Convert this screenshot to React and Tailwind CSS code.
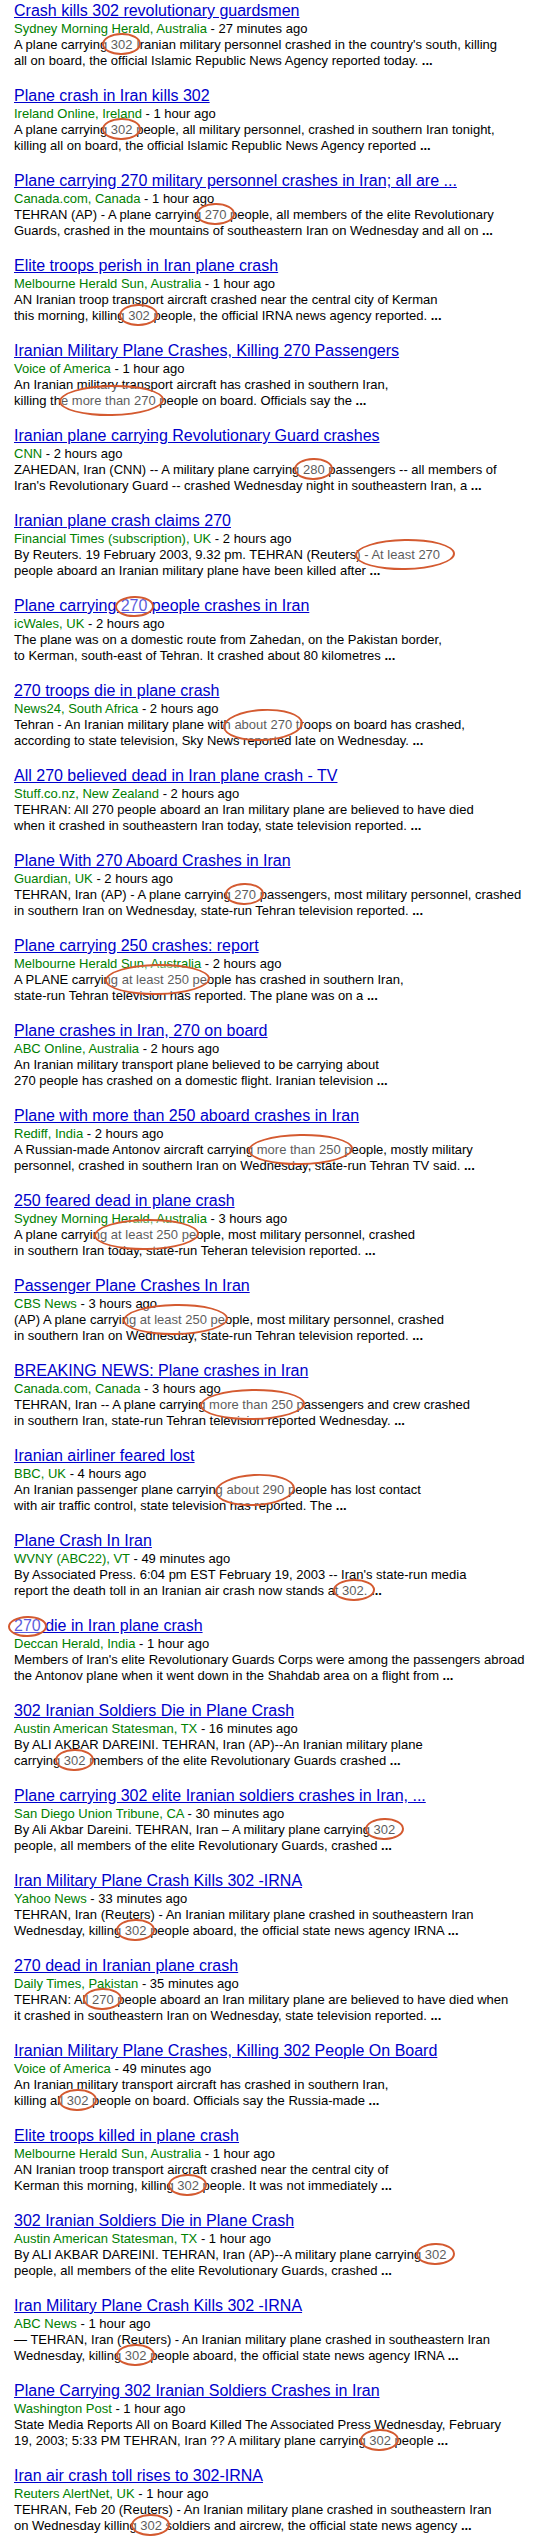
const shapes = {
  s: "-left-[9px] -right-[8px] -top-[4px] -bottom-[3px] -rotate-1",
  w: "-left-[13px] -right-[8px] -top-[8px] -bottom-[8px] -rotate-1",
  a: "-left-[17px] -right-[21px] -top-[8px] -bottom-[8px] -rotate-1",
  t: "-left-[6px] -right-[6px] -top-[1px] -bottom-[3px] -rotate-1",
  r: "-left-[9px] -right-[15px] -top-[8px] -bottom-[8px] -rotate-1",
  b: "-left-[11px] -right-[11px] -top-[8px] -bottom-[9px] -rotate-3",
  m: "-left-[9px] -right-[12px] -top-[8px] -bottom-[8px] -rotate-1",
};

const items = [
  ["Crash kills 302 revolutionary guardsmen", "Sydney Morning Herald, Australia", "27 minutes ago",
    "A plane carrying [[302|s]] Iranian military personnel crashed in the country's south, killing",
    "all on board, the official Islamic Republic News Agency reported today."],
  ["Plane crash in Iran kills 302", "Ireland Online, Ireland", "1 hour ago",
    "A plane carrying [[302|s]] people, all military personnel, crashed in southern Iran tonight,",
    "killing all on board, the official Islamic Republic News Agency reported"],
  ["Plane carrying 270 military personnel crashes in Iran; all are ...", "Canada.com, Canada", "1 hour ago",
    "TEHRAN (AP) - A plane carrying [[270|s]] people, all members of the elite Revolutionary",
    "Guards, crashed in the mountains of southeastern Iran on Wednesday and all on"],
  ["Elite troops perish in Iran plane crash", "Melbourne Herald Sun, Australia", "1 hour ago",
    "AN Iranian troop transport aircraft crashed near the central city of Kerman",
    "this morning, killing [[302|s]] people, the official IRNA news agency reported."],
  ["Iranian Military Plane Crashes, Killing 270 Passengers", "Voice of America", "1 hour ago",
    "An Iranian military transport aircraft has crashed in southern Iran,",
    "killing the [[more than 270|w]] people on board. Officials say the"],
  ["Iranian plane carrying Revolutionary Guard crashes", "CNN", "2 hours ago",
    "ZAHEDAN, Iran (CNN) -- A military plane carrying [[280|s]] passengers -- all members of",
    "Iran's Revolutionary Guard -- crashed Wednesday night in southeastern Iran, a"],
  ["Iranian plane crash claims 270", "Financial Times (subscription), UK", "2 hours ago",
    "By Reuters. 19 February 2003, 9.32 pm. TEHRAN (Reuters) [[- At least 270|r]]",
    "people aboard an Iranian military plane have been killed after"],
  ["Plane carrying [[270|t]] people crashes in Iran", "icWales, UK", "2 hours ago",
    "The plane was on a domestic route from Zahedan, on the Pakistan border,",
    "to Kerman, south-east of Tehran. It crashed about 80 kilometres"],
  ["270 troops die in plane crash", "News24, South Africa", "2 hours ago",
    "Tehran - An Iranian military plane with [[about 270|b]] troops on board has crashed,",
    "according to state television, Sky News reported late on Wednesday."],
  ["All 270 believed dead in Iran plane crash - TV", "Stuff.co.nz, New Zealand", "2 hours ago",
    "TEHRAN: All 270 people aboard an Iran military plane are believed to have died",
    "when it crashed in southeastern Iran today, state television reported."],
  ["Plane With 270 Aboard Crashes in Iran", "Guardian, UK", "2 hours ago",
    "TEHRAN, Iran (AP) - A plane carrying [[270|s]] passengers, most military personnel, crashed",
    "in southern Iran on Wednesday, state-run Tehran television reported."],
  ["Plane carrying 250 crashes: report", "Melbourne Herald Sun, Australia", "2 hours ago",
    "A PLANE carrying [[at least 250|a]] people has crashed in southern Iran,",
    "state-run Tehran television has reported. The plane was on a"],
  ["Plane crashes in Iran, 270 on board", "ABC Online, Australia", "2 hours ago",
    "An Iranian military transport plane believed to be carrying about",
    "270 people has crashed on a domestic flight. Iranian television"],
  ["Plane with more than 250 aboard crashes in Iran", "Rediff, India", "2 hours ago",
    "A Russian-made Antonov aircraft carrying [[more than 250|m]] people, mostly military",
    "personnel, crashed in southern Iran on Wednesday, state-run Tehran TV said."],
  ["250 feared dead in plane crash", "Sydney Morning Herald, Australia", "3 hours ago",
    "A plane carrying [[at least 250|a]] people, most military personnel, crashed",
    "in southern Iran today, state-run Teheran television reported."],
  ["Passenger Plane Crashes In Iran", "CBS News", "3 hours ago",
    "(AP) A plane carrying [[at least 250|a]] people, most military personnel, crashed",
    "in southern Iran on Wednesday, state-run Tehran television reported."],
  ["BREAKING NEWS: Plane crashes in Iran", "Canada.com, Canada", "3 hours ago",
    "TEHRAN, Iran -- A plane carrying [[more than 250|m]] passengers and crew crashed",
    "in southern Iran, state-run Tehran television reported Wednesday."],
  ["Iranian airliner feared lost", "BBC, UK", "4 hours ago",
    "An Iranian passenger plane carrying [[about 290|b]] people has lost contact",
    "with air traffic control, state television has reported. The"],
  ["Plane Crash In Iran", "WVNY (ABC22), VT", "49 minutes ago",
    "By Associated Press. 6:04 pm EST February 19, 2003 -- Iran's state-run media",
    "report the death toll in an Iranian air crash now stands at [[302.|s]]"],
  ["[[270|t]] die in Iran plane crash", "Deccan Herald, India", "1 hour ago",
    "Members of Iran's elite Revolutionary Guards Corps were among the passengers abroad",
    "the Antonov plane when it went down in the Shahdab area on a flight from"],
  ["302 Iranian Soldiers Die in Plane Crash", "Austin American Statesman, TX", "16 minutes ago",
    "By ALI AKBAR DAREINI. TEHRAN, Iran (AP)--An Iranian military plane",
    "carrying [[302|s]] members of the elite Revolutionary Guards crashed"],
  ["Plane carrying 302 elite Iranian soldiers crashes in Iran, ...", "San Diego Union Tribune, CA", "30 minutes ago",
    "By Ali Akbar Dareini. TEHRAN, Iran – A military plane carrying [[302|s]]",
    "people, all members of the elite Revolutionary Guards, crashed"],
  ["Iran Military Plane Crash Kills 302 -IRNA", "Yahoo News", "33 minutes ago",
    "TEHRAN, Iran (Reuters) - An Iranian military plane crashed in southeastern Iran",
    "Wednesday, killing [[302|s]] people aboard, the official state news agency IRNA"],
  ["270 dead in Iranian plane crash", "Daily Times, Pakistan", "35 minutes ago",
    "TEHRAN: All [[270|s]] people aboard an Iran military plane are believed to have died when",
    "it crashed in southeastern Iran on Wednesday, state television reported."],
  ["Iranian Military Plane Crashes, Killing 302 People On Board", "Voice of America", "49 minutes ago",
    "An Iranian military transport aircraft has crashed in southern Iran,",
    "killing all [[302|s]] people on board. Officials say the Russia-made"],
  ["Elite troops killed in plane crash", "Melbourne Herald Sun, Australia", "1 hour ago",
    "AN Iranian troop transport aircraft crashed near the central city of",
    "Kerman this morning, killing [[302|s]] people. It was not immediately"],
  ["302 Iranian Soldiers Die in Plane Crash", "Austin American Statesman, TX", "1 hour ago",
    "By ALI AKBAR DAREINI. TEHRAN, Iran (AP)--A military plane carrying [[302|s]]",
    "people, all members of the elite Revolutionary Guards, crashed"],
  ["Iran Military Plane Crash Kills 302 -IRNA", "ABC News", "1 hour ago",
    "— TEHRAN, Iran (Reuters) - An Iranian military plane crashed in southeastern Iran",
    "Wednesday, killing [[302|s]] people aboard, the official state news agency IRNA"],
  ["Plane Carrying 302 Iranian Soldiers Crashes in Iran", "Washington Post", "1 hour ago",
    "State Media Reports All on Board Killed The Associated Press Wednesday, February",
    "19, 2003; 5:33 PM TEHRAN, Iran ?? A military plane carrying [[302|s]] people"],
  ["Iran air crash toll rises to 302-IRNA", "Reuters AlertNet, UK", "1 hour ago",
    "TEHRAN, Feb 20 (Reuters) - An Iranian military plane crashed in southeastern Iran",
    "on Wednesday killing [[302|s]] soldiers and aircrew, the official state news agency"],
];

// "[[text|shape]]" marks the hand-drawn circles
function Marked({ text }) {
  const parts = text.split(/(\[\[[^\]]+\]\])/);
  return parts.map((p, i) => {
    const m = p.match(/^\[\[(.+)\|(\w)\]\]$/);
    if (!m) return <span key={i}>{p}</span>;
    return (
      <span key={i} className="relative">
        {m[1]}
        <span
          className={`absolute ${shapes[m[2]]} rounded-[50%] border-2 border-[#d45a30] bg-white/35 pointer-events-none`}
        ></span>
      </span>
    );
  });
}

export default function App() {
  return (
    <div className="w-[537px] min-h-[2546px] bg-white pt-[1px] pl-[14px] font-['Liberation_Sans',Arial,sans-serif] text-black">
      {items.map(([title, source, time, l1, l2], i) => (
        <div key={i} className="mb-[17px] whitespace-nowrap">
          <div className="text-[16px] leading-[20px]">
            <a href="#" className="text-[#0000cc] underline">
              <Marked text={title} />
            </a>
          </div>
          <div className="text-[13px] leading-[16px]">
            <span className="text-[#008000]">{source}</span> - {time}
          </div>
          <div className="text-[13px] leading-[16px]">
            <Marked text={l1} />
          </div>
          <div className="text-[13px] leading-[16px]">
            <Marked text={l2} /> <b>...</b>
          </div>
        </div>
      ))}
    </div>
  );
}
